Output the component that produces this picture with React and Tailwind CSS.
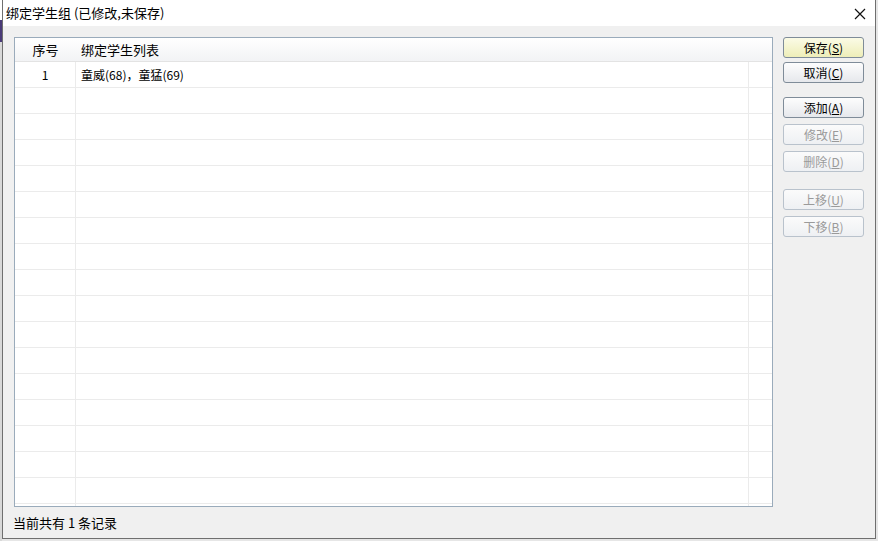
const rows = [{ no: "1", names: "童威(68)，童猛(69)" }];
const EMPTY_ROWS = 17;

const buttons = [
  { label: "保存", key: "S", primary: true, gap: 0 },
  { label: "取消", key: "C", gap: 4 },
  { label: "添加", key: "A", gap: 14 },
  { label: "修改", key: "E", disabled: true, gap: 6 },
  { label: "删除", key: "D", disabled: true, gap: 6 },
  { label: "上移", key: "U", disabled: true, gap: 17 },
  { label: "下移", key: "B", disabled: true, gap: 6 },
];

function DialogButton({ label, accel, primary, disabled }) {
  const tone = disabled
    ? "border-[#b9c2cc] text-[#9a9a9a] bg-gradient-to-b from-[#fbfbfb] to-[#eef0f3]"
    : primary
      ? "border-[#7f8c99] text-black bg-gradient-to-b from-[#fbfbe6] to-[#eeeeb8]"
      : "border-[#7f8c99] text-black bg-gradient-to-b from-[#fdfdfd] to-[#e6e8ec]";
  return (
    <button className={`w-[81px] h-[21px] rounded-[3px] border text-[12px] leading-none flex items-center justify-center ${tone}`}>
      {label}(<span className="underline">{accel}</span>)
    </button>
  );
}

function Row({ no, names }) {
  return (
    <div className="flex h-[26px] shrink-0 border-b border-[#ebebeb]">
      <div className="w-[61px] border-r border-[#ebebeb] flex items-center justify-center">{no}</div>
      <div className="w-[673px] border-r border-[#ebebeb] flex items-center pl-[5px]">{names}</div>
      <div className="flex-1" />
    </div>
  );
}

export default function App() {
  return (
    <div className="w-[878px] h-[541px] flex bg-[#e6e6e6] text-black" style={{ fontFamily: '"Noto Sans CJK SC", "Noto Sans", sans-serif' }}>
      {/* strip of the desktop behind the window */}
      <div className="w-[2px] flex flex-col">
        <div className="h-[20px] bg-white" />
        <div className="h-[22px] bg-[#4a3b78]" />
        <div className="flex-1 bg-[#d8d8d8]" />
      </div>

      <div className="w-[874px] h-[539px] border border-t-0 border-[#6f6f6f] bg-[#f0f0f0] flex flex-col">
        <div className="h-[26px] bg-white flex items-center justify-between pl-[3px] pr-[9px]">
          <span className="text-[13px]">绑定学生组 (已修改,未保存)</span>
          <svg width="12" height="12" viewBox="0 0 12 12" className="mt-[1px]">
            <path d="M1 1L11 11M11 1L1 11" stroke="#111" strokeWidth="1.2" />
          </svg>
        </div>

        <div className="flex gap-[10px] pl-[11px] pt-[11px]">
          <div className="w-[759px] h-[470px] border border-[#9aabbb] bg-white flex flex-col overflow-hidden text-[12px]">
            <div className="flex h-[24px] shrink-0 bg-gradient-to-b from-white to-[#f2f3f5] border-b border-[#e3e3e3] text-[13px]">
              <div className="w-[61px] flex items-center justify-center">序号</div>
              <div className="w-[673px] flex items-center pl-[5px]">绑定学生列表</div>
            </div>
            {rows.map((r) => (
              <Row key={r.no} no={r.no} names={r.names} />
            ))}
            {Array.from({ length: EMPTY_ROWS }, (_, i) => (
              <Row key={`e${i}`} no="" names="" />
            ))}
          </div>

          <div className="flex flex-col">
            {buttons.map((b) => (
              <div key={b.key} style={{ marginTop: b.gap }}>
                <DialogButton label={b.label} accel={b.key} primary={b.primary} disabled={b.disabled} />
              </div>
            ))}
          </div>
        </div>

        <div className="pl-[10px] pt-[6px] text-[13px]">当前共有 1 条记录</div>
      </div>
    </div>
  );
}
